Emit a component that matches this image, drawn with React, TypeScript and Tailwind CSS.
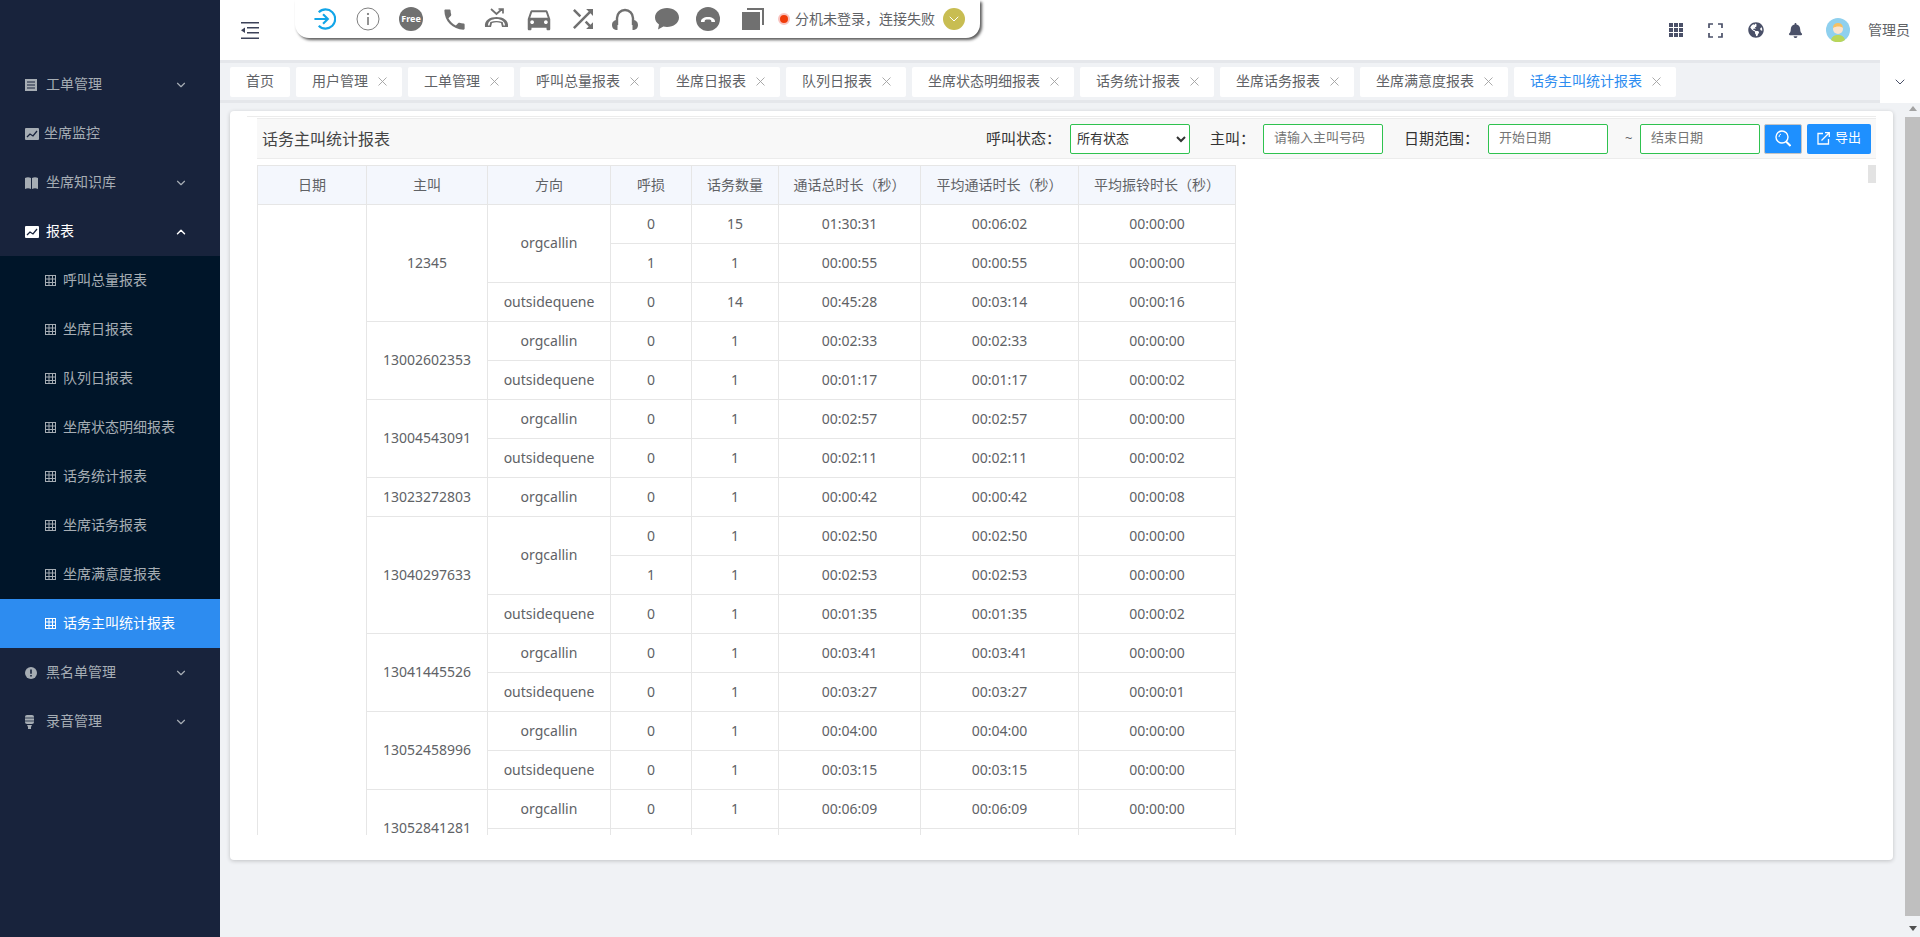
import React from 'react';
import { ChevronDown, ChevronUp } from 'lucide-react';
import { MdLocalPhone, MdDirectionsCar, MdShuffle } from 'react-icons/md';
import { FaBell, FaGlobeAmericas } from 'react-icons/fa';

const FONT = "font-['Noto_Sans','Noto_Sans_CJK_SC',sans-serif]";

const IconDoc = () => (
  <svg width="12" height="12" viewBox="0 0 12 12">
    <rect width="12" height="12" fill="currentColor" />
    <path d="M2 3h8M2 6h8M2 9h8" stroke="#18233c" strokeWidth="1" />
  </svg>
);
const IconChart = () => (
  <svg width="14" height="12" viewBox="0 0 14 12">
    <rect width="14" height="12" rx="1" fill="currentColor" />
    <path d="M2 9l3-3 3 2 4-5" stroke="#18233c" strokeWidth="1.3" fill="none" />
  </svg>
);
const IconBook = () => (
  <svg width="13" height="12" viewBox="0 0 13 12">
    <path d="M0 1c2-1 4-1 6 0v11c-2-1-4-1-6 0zM7 1c2-1 4-1 6 0v11c-2-1-4-1-6 0z" fill="currentColor" />
  </svg>
);
const IconAlert = () => (
  <svg width="12" height="12" viewBox="0 0 12 12">
    <circle cx="6" cy="6" r="6" fill="currentColor" />
    <path d="M6 2.5v4.2M6 8v1.5" stroke="#18233c" strokeWidth="1.6" />
  </svg>
);
const IconMic = () => (
  <svg width="9" height="14" viewBox="0 0 9 14">
    <rect width="9" height="9" rx="2" fill="currentColor" />
    <path d="M0 3h9M0 6h9" stroke="#18233c" strokeWidth="0.8" />
    <path d="M2 10h5l-1 2v2H3v-2z" fill="currentColor" />
  </svg>
);
const IconTable = () => (
  <svg width="11" height="11" viewBox="0 0 11 11" fill="none" stroke="currentColor" strokeWidth="1">
    <rect x="0.5" y="0.5" width="10" height="10" />
    <path d="M0 4h11M0 7.500h11M4 0v11M7.500 0v11" />
  </svg>
);
const IconClose = () => (
  <svg className="ml-[10px] shrink-0" width="9" height="9" viewBox="0 0 9 9" fill="none" stroke="#a0a0a0" strokeWidth="0.900">
    <path d="M0.500 0.500l8 8M8.500 0.500l-8 8" />
  </svg>
);

const menuTop1 = [
  { label: '工单管理', icon: <IconDoc />, arrow: true },
  { label: '坐席监控', icon: <IconChart />, arrow: false },
  { label: '坐席知识库', icon: <IconBook />, arrow: true },
];
const subMenu = ['呼叫总量报表', '坐席日报表', '队列日报表', '坐席状态明细报表', '话务统计报表', '坐席话务报表', '坐席满意度报表', '话务主叫统计报表'];
const menuBottom = [
  { label: '黑名单管理', icon: <IconAlert /> },
  { label: '录音管理', icon: <IconMic /> },
];

const Sidebar = () => (
  <aside className="w-[220px] shrink-0 bg-[#18233c] pt-[60px] text-[14px] text-[#a6adb4]">
    {menuTop1.map((m) => (
      <div key={m.label} className="flex h-[49px] items-center pl-[25px] pr-[32px]">
        <span className="flex w-[21px] items-center">{m.icon}</span>
        <span className={m.arrow ? 'pb-[2px]' : '-ml-[2px] pb-[2px]'}>{m.label}</span>
        {m.arrow && <ChevronDown className="ml-auto h-[14px] w-[14px]" strokeWidth={2} />}
      </div>
    ))}
    <div className="flex h-[49px] items-center pl-[25px] pr-[32px] text-white">
      <span className="flex w-[21px] items-center"><IconChart /></span>
      <span className="pb-[2px]">报表</span>
      <ChevronUp className="ml-auto h-[14px] w-[14px]" strokeWidth={2.500} />
    </div>
    <div className="bg-[#001529]">
      {subMenu.map((s, i) => (
        <div
          key={s}
          className={
            i === 7
              ? 'flex h-[49px] items-center bg-[#2d8cf0] pl-[45px] text-white'
              : 'flex h-[49px] items-center pl-[45px]'
          }
        >
          <span className="flex w-[18px] items-center"><IconTable /></span>
          <span className="pb-[2px]">{s}</span>
        </div>
      ))}
    </div>
    {menuBottom.map((m) => (
      <div key={m.label} className="flex h-[49px] items-center pl-[25px] pr-[32px]">
        <span className="flex w-[21px] items-center">{m.icon}</span>
        <span className="pb-[2px]">{m.label}</span>
        <ChevronDown className="ml-auto h-[14px] w-[14px]" strokeWidth={2} />
      </div>
    ))}
  </aside>
);

const Toolbar = () => (
  <div className="ml-[36px] flex h-[38px] w-[685px] items-center rounded-b-[14px] bg-white pl-[18px] text-[#707070] shadow-[2px_2px_3px_rgba(0,0,0,0.65)]">
    <div className="flex w-[23px] justify-center">
      <svg width="24" height="24" viewBox="0 0 24 24" fill="none" stroke="#12a5e8" strokeWidth="2.200">
        <path d="M6 5a10 10 0 1 1 0 14" />
        <path d="M1.500 12h14M10.500 7l5 5-5 5" />
      </svg>
    </div>
    <div className="ml-[20px] flex w-[24px] justify-center">
      <svg width="24" height="24" viewBox="0 0 24 24" fill="none" stroke="#707070" strokeWidth="0.900">
        <circle cx="12" cy="12" r="11" />
        <path d="M12 10v8" strokeWidth="1.500" />
        <circle cx="12" cy="7" r="0.700" fill="#707070" />
      </svg>
    </div>
    <div className="ml-[19px] flex h-[24px] w-[24px] items-center justify-center rounded-full bg-[#707070] text-[9px] font-bold text-white">Free</div>
    <MdLocalPhone className="ml-[18px] h-[27px] w-[27px]" />
    <svg className="ml-[16px]" width="25" height="22" viewBox="0 0 25 22" fill="#707070">
      <path d="M1 19c-1-7 5-10 11.500-10S25 12 24 19h-6l-1-4c-3-1-6-1-9 0l-1 4z M4 17.500h1.500l.8-3.500c4-1.500 8-1.500 12.400 0l.8 3.500H21c0-4-4-6.500-8.500-6.500S4 13 4 17.500z" fillRule="evenodd" />
      <path d="M7 1l5.500 5L18 1M14.500 1H19v4.500" fill="none" stroke="#707070" strokeWidth="1.700" />
    </svg>
    <MdDirectionsCar className="ml-[15px] h-[30px] w-[30px]" />
    <MdShuffle className="ml-[14px] h-[30px] w-[30px]" />
    <svg className="ml-[14px]" width="26" height="24" viewBox="0 0 26 24" fill="none">
      <path d="M5 18V11a8 8 0 0 1 16 0v7" stroke="#707070" strokeWidth="2.400" />
      <path d="M5.500 13v10C2 23 0 21 0 18s2-5 5.500-5zM20.500 13v10c3.500 0 5.500-2 5.500-5s-2-5-5.500-5z" fill="#707070" />
    </svg>
    <svg className="ml-[17px]" width="24" height="22" viewBox="0 0 24 22">
      <path d="M12 0c6.500 0 12 4 12 9.500S18.500 19 12 19c-1.300 0-2.500-.2-3.600-.5L3 21.500l1-5C1.500 14.800 0 12.300 0 9.500 0 4 5.500 0 12 0z" fill="#707070" />
    </svg>
    <svg className="ml-[17px]" width="24" height="24" viewBox="0 0 24 24">
      <circle cx="12" cy="12" r="12" fill="#707070" />
      <path d="M5 15c-.5-3 3-5 7-5s7.500 2 7 5h-3.500l-.5-2c-2-.6-4-.6-6 0l-.5 2z" fill="#fff" />
    </svg>
    <svg className="ml-[22px]" width="22" height="22" viewBox="0 0 22 22" fill="#707070">
      <path d="M5 0h17v17h-2V2H5z" />
      <rect y="4" width="18" height="18" />
    </svg>
    <span className="ml-[14px] h-[12px] w-[12px] rounded-full border-2 border-[#f9c4c0] bg-[#f03c0a]" />
    <span className="ml-[5px] whitespace-nowrap text-[14px] leading-none text-[#606266]">分机未登录，连接失败</span>
    <span className="ml-[8px] flex h-[22px] w-[22px] items-center justify-center rounded-full bg-[#c8bd52]">
      <ChevronDown className="h-[16px] w-[16px] text-white" strokeWidth={1.500} />
    </span>
  </div>
);

const HeaderRight = () => (
  <div className="ml-auto flex h-[60px] items-center pr-[10px] text-[#4a5068]">
    <svg width="14" height="14" viewBox="0 0 14 14" fill="currentColor">
      {[0, 5, 10].map((y) =>
        [0, 5, 10].map((x) => <rect key={`${x}-${y}`} x={x} y={y} width="4" height="4" />)
      )}
    </svg>
    <svg className="ml-[25px]" width="15" height="15" viewBox="0 0 15 15" fill="none" stroke="currentColor" strokeWidth="1.700">
      <path d="M1 5V1h4M10 1h4v4M14 10v4h-4M5 14H1v-4" />
    </svg>
    <FaGlobeAmericas className="ml-[25px] h-[16px] w-[16px]" />
    <FaBell className="ml-[24px] h-[15px] w-[15px]" />
    <svg className="ml-[23px]" width="24" height="24" viewBox="0 0 24 24">
      <circle cx="12" cy="12" r="12" fill="#8fd0ee" />
      <path d="M5 22c1-4 4-5 7-5s6 1 7 5a12 12 0 0 1-14 0z" fill="#b9d65a" />
      <circle cx="12" cy="11" r="5" fill="#fbe3cd" />
      <path d="M7 10c0-4 3-5 5-5s5 1 5 5c-2-2-7-2-10 0z" fill="#f6c063" />
    </svg>
    <span className="ml-[18px] pb-[2px] text-[14px] text-[#606266]">管理员</span>
  </div>
);

const tabs = ['用户管理', '工单管理', '呼叫总量报表', '坐席日报表', '队列日报表', '坐席状态明细报表', '话务统计报表', '坐席话务报表', '坐席满意度报表', '话务主叫统计报表'];

const TabBar = () => (
  <div className="flex h-[43px] border-y-[3px] border-y-[#e5e7eb] bg-[#f0f2f5]">
    <div className="flex flex-1 items-center gap-[6px] pl-[10px] text-[14px] text-[#606266]">
      <div className="flex h-[30px] items-center rounded-[2px] bg-white px-[16px] pb-[2px]">首页</div>
      {tabs.map((t, i) => (
        <div key={t} className="flex h-[30px] items-center rounded-[2px] bg-white pl-[16px] pr-[15px]">
          <span className={i === 9 ? 'whitespace-nowrap pb-[2px] text-[#2d8cf0]' : 'whitespace-nowrap pb-[2px]'}>{t}</span>
          <IconClose />
        </div>
      ))}
    </div>
    <div className="-my-[3px] flex w-[40px] items-center justify-center bg-white">
      <ChevronDown className="h-[16px] w-[16px] text-[#4a5068]" strokeWidth={1.500} />
    </div>
  </div>
);

type Row = { caller?: [string, number]; dir?: [string, number]; loss: string; count: string; total: string; avg: string; ring: string };

const rows: Row[] = [
  { caller: ['12345', 3], dir: ['orgcallin', 2], loss: '0', count: '15', total: '01:30:31', avg: '00:06:02', ring: '00:00:00' },
  { loss: '1', count: '1', total: '00:00:55', avg: '00:00:55', ring: '00:00:00' },
  { dir: ['outsidequene', 1], loss: '0', count: '14', total: '00:45:28', avg: '00:03:14', ring: '00:00:16' },
  { caller: ['13002602353', 2], dir: ['orgcallin', 1], loss: '0', count: '1', total: '00:02:33', avg: '00:02:33', ring: '00:00:00' },
  { dir: ['outsidequene', 1], loss: '0', count: '1', total: '00:01:17', avg: '00:01:17', ring: '00:00:02' },
  { caller: ['13004543091', 2], dir: ['orgcallin', 1], loss: '0', count: '1', total: '00:02:57', avg: '00:02:57', ring: '00:00:00' },
  { dir: ['outsidequene', 1], loss: '0', count: '1', total: '00:02:11', avg: '00:02:11', ring: '00:00:02' },
  { caller: ['13023272803', 1], dir: ['orgcallin', 1], loss: '0', count: '1', total: '00:00:42', avg: '00:00:42', ring: '00:00:08' },
  { caller: ['13040297633', 3], dir: ['orgcallin', 2], loss: '0', count: '1', total: '00:02:50', avg: '00:02:50', ring: '00:00:00' },
  { loss: '1', count: '1', total: '00:02:53', avg: '00:02:53', ring: '00:00:00' },
  { dir: ['outsidequene', 1], loss: '0', count: '1', total: '00:01:35', avg: '00:01:35', ring: '00:00:02' },
  { caller: ['13041445526', 2], dir: ['orgcallin', 1], loss: '0', count: '1', total: '00:03:41', avg: '00:03:41', ring: '00:00:00' },
  { dir: ['outsidequene', 1], loss: '0', count: '1', total: '00:03:27', avg: '00:03:27', ring: '00:00:01' },
  { caller: ['13052458996', 2], dir: ['orgcallin', 1], loss: '0', count: '1', total: '00:04:00', avg: '00:04:00', ring: '00:00:00' },
  { dir: ['outsidequene', 1], loss: '0', count: '1', total: '00:03:15', avg: '00:03:15', ring: '00:00:00' },
  { caller: ['13052841281', 2], dir: ['orgcallin', 1], loss: '0', count: '1', total: '00:06:09', avg: '00:06:09', ring: '00:00:00' },
  { dir: ['', 1], loss: '', count: '', total: '', avg: '', ring: '' },
];

const cell = 'h-[39px] border border-[#e6e6e6] p-0 pb-[2px] text-center font-normal';

const ReportTable = () => (
  <table className="w-[978px] table-fixed border-collapse text-[14px] text-[#606266]">
    <colgroup>
      <col className="w-[109px]" />
      <col className="w-[121px]" />
      <col className="w-[123px]" />
      <col className="w-[81px]" />
      <col className="w-[87px]" />
      <col className="w-[142px]" />
      <col className="w-[158px]" />
      <col className="w-[157px]" />
    </colgroup>
    <thead>
      <tr className="bg-[#f4f7fd]">
        {['日期', '主叫', '方向', '呼损', '话务数量', '通话总时长（秒）', '平均通话时长（秒）', '平均振铃时长（秒）'].map((h) => (
          <th key={h} className={cell}>{h}</th>
        ))}
      </tr>
    </thead>
    <tbody>
      {rows.map((r, i) => (
        <tr key={i}>
          {i === 0 && <td className={cell} rowSpan={rows.length} />}
          {r.caller && <td className={cell} rowSpan={r.caller[1]}>{r.caller[0]}</td>}
          {r.dir && <td className={cell} rowSpan={r.dir[1]}>{r.dir[0]}</td>}
          <td className={cell}>{r.loss}</td>
          <td className={cell}>{r.count}</td>
          <td className={cell}>{r.total}</td>
          <td className={cell}>{r.avg}</td>
          <td className={cell}>{r.ring}</td>
        </tr>
      ))}
    </tbody>
  </table>
);

const inputCls = 'h-[30px] w-[120px] rounded-[2px] border border-[#2fc24f] bg-white px-[10px] pb-[3px] text-[13px] text-[#606266] outline-none placeholder:text-[#757575]';

const Filters = () => (
  <div className="ml-auto flex items-center text-[15px] text-[#333]">
    <span className="pb-[1px]">呼叫状态：</span>
    <select className="ml-[9px] h-[30px] w-[120px] rounded-[2px] border border-[#2fc24f] bg-white pb-[2px] pl-[2px] text-[13px] text-[#333] outline-none" defaultValue="all">
      <option value="all">所有状态</option>
    </select>
    <span className="ml-[20px] pb-[1px]">主叫：</span>
    <input className={`ml-[8px] ${inputCls}`} placeholder="请输入主叫号码" />
    <span className="ml-[21px] pb-[1px]">日期范围：</span>
    <input className={`ml-[9px] ${inputCls}`} placeholder="开始日期" />
    <span className="ml-[17px] w-[15px] text-[13px] text-[#606266]">~</span>
    <input className={inputCls} placeholder="结束日期" />
    <button className="ml-[4px] flex h-[30px] w-[38px] items-center justify-center rounded-[2px] border border-[#c4c4c4] bg-[#1e90ff]">
      <svg width="16" height="17" viewBox="0 0 16 17" fill="none" stroke="#fff" strokeWidth="1.400">
        <circle cx="7" cy="7" r="6" />
        <path d="M11 11.500l4.500 4.500" strokeWidth="2" />
        <path d="M4 7a3 3 0 0 1 2-3" strokeWidth="1" />
      </svg>
    </button>
    <button className="ml-[5px] flex h-[30px] w-[64px] items-center justify-center gap-[5px] rounded-[2px] bg-[#1e90ff] text-[13px] text-white">
      <svg width="13" height="13" viewBox="0 0 13 13" fill="none" stroke="#fff" strokeWidth="1.300">
        <path d="M6 1.500H1v10.500h10.500V7" />
        <path d="M4.500 8.500L12 1M8 .7h4.300V5" />
      </svg>
      <span className="pb-[2px]">导出</span>
    </button>
  </div>
);

const ReportCard = () => (
  <div className="flex h-[749px] flex-col rounded-[4px] bg-white pl-[27px] pr-[17px] pt-[5px] shadow-[0_1px_4px_rgba(0,0,0,0.2)]">
    <div className="-ml-[10px] h-px shrink-0 bg-[#ececec]" />
    <div className="mt-px flex h-[41px] shrink-0 items-center border-y border-y-[#ececec] bg-[#f8f8f8] pl-[5px] pr-[5px]">
      <span className="text-[16px] text-[#444]">话务主叫统计报表</span>
      <Filters />
    </div>
    <div className="relative mt-[6px] h-[670px] overflow-hidden">
      <ReportTable />
      <div className="absolute right-0 top-0 h-[18px] w-[8px] bg-[#e3e3e3]" />
    </div>
  </div>
);

const PageScrollbar = () => (
  <div className="flex w-[15px] shrink-0 flex-col items-center bg-[#f0f2f5] pb-[6px] pt-[3px]">
    <span className="h-0 w-0 border-x-[4px] border-b-[5px] border-x-transparent border-b-[#a3a3a3]" />
    <div className="mb-[10px] mt-[6px] flex-1 self-stretch bg-[#bfbfbf]" />
    <span className="h-0 w-0 border-x-[4px] border-t-[5px] border-x-transparent border-t-[#505050]" />
  </div>
);

export default function App() {
  return (
    <div className={`flex h-[937px] w-[1920px] overflow-hidden bg-[#f0f2f5] ${FONT}`}>
      <Sidebar />
      <div className="flex min-w-0 flex-1 flex-col">
        <header className="flex h-[60px] shrink-0 items-start bg-white">
          <svg className="ml-[21px] mt-[22px]" width="18" height="17" viewBox="0 0 18 17" fill="#3c4259">
            <rect width="18" height="1.500" />
            <rect y="15.500" width="18" height="1.500" />
            <rect x="6" y="5" width="12" height="1.500" />
            <rect x="6" y="10" width="12" height="1.500" />
            <path d="M0 8.200L4 5.500v5.500z" />
          </svg>
          <Toolbar />
          <HeaderRight />
        </header>
        <TabBar />
        <div className="flex flex-1">
          <main className="min-w-0 flex-1 pl-[10px] pr-[12px] pt-[8px]">
            <ReportCard />
          </main>
          <PageScrollbar />
        </div>
      </div>
    </div>
  );
}
